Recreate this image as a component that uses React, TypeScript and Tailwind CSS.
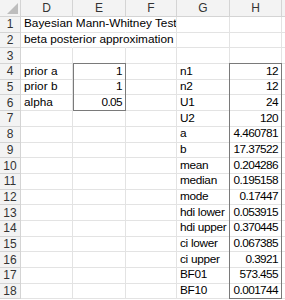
import React from 'react'

const cols = ['D', 'E', 'F', 'G', 'H']
const colW = ['w-[52px]', 'w-[53px]', 'w-[51px]', 'w-[53px]', 'w-[52px]']

type Cell = { t: string; right?: boolean }

// sheet content, keyed by row then column letter
const data: Record<number, Record<string, Cell>> = {
  1: { D: { t: 'Bayesian Mann-Whitney Test' } },
  2: { D: { t: 'beta posterior approximation' } },
  4: { D: { t: 'prior a' }, E: { t: '1', right: true }, G: { t: 'n1' }, H: { t: '12', right: true } },
  5: { D: { t: 'prior b' }, E: { t: '1', right: true }, G: { t: 'n2' }, H: { t: '12', right: true } },
  6: { D: { t: 'alpha' }, E: { t: '0.05', right: true }, G: { t: 'U1' }, H: { t: '24', right: true } },
  7: { G: { t: 'U2' }, H: { t: '120', right: true } },
  8: { G: { t: 'a' }, H: { t: '4.460781', right: true } },
  9: { G: { t: 'b' }, H: { t: '17.37522', right: true } },
  10: { G: { t: 'mean' }, H: { t: '0.204286', right: true } },
  11: { G: { t: 'median' }, H: { t: '0.195158', right: true } },
  12: { G: { t: 'mode' }, H: { t: '0.17447', right: true } },
  13: { G: { t: 'hdi lower' }, H: { t: '0.053915', right: true } },
  14: { G: { t: 'hdi upper' }, H: { t: '0.370445', right: true } },
  15: { G: { t: 'ci lower' }, H: { t: '0.067385', right: true } },
  16: { G: { t: 'ci upper' }, H: { t: '0.3921', right: true } },
  17: { G: { t: 'BF01' }, H: { t: '573.455', right: true } },
  18: { G: { t: 'BF10' }, H: { t: '0.001744', right: true } },
}

// rows whose title text spills over D..F, so the gridlines there are hidden
const spill = [1, 2]

const rows = Array.from({ length: 18 }, (_, i) => i + 1)

export default function App() {
  return (
    <div className="relative w-[285px] h-[300px] overflow-hidden bg-white text-[11.8px] text-black font-['Liberation_Sans',Arial,sans-serif]">
      {/* column header */}
      <div className="flex h-[17px] bg-[#f3f3f3] border-b border-[#d4d4d4]">
        <div className="relative w-[21px] shrink-0 border-r border-[#d4d4d4]">
          <div className="absolute right-[2px] bottom-[2px] w-0 h-0 border-l-[11px] border-l-transparent border-b-[11px] border-b-[#bdbdbd]" />
        </div>
        {cols.map((c, i) => (
          <div
            key={c}
            className={`${colW[i]} shrink-0 flex items-center justify-center border-r border-[#d4d4d4] text-[#333] text-[12px]`}
          >
            {c}
          </div>
        ))}
        <div className="flex-1" />
      </div>

      {rows.map((r) => (
        <div key={r} className="flex h-[15.7px]">
          <div className="w-[21px] shrink-0 flex items-center justify-center bg-[#f3f3f3] border-r border-b border-[#d4d4d4] text-[#333] text-[12px] leading-none">
            {r}
          </div>
          {cols.map((c, i) => {
            const cell = data[r]?.[c]
            const hideRight = spill.includes(r) && i < 2
            return (
              <div
                key={c}
                className={`${colW[i]} shrink-0 flex items-center border-r border-b border-b-[#e3e3e3] leading-none overflow-visible whitespace-nowrap ${
                  hideRight ? 'border-r-transparent' : 'border-r-[#e3e3e3]'
                } ${cell?.right ? 'justify-end pr-[3px] tracking-[-0.6px]' : 'pl-[3px]'} ${
                  c === 'G' ? 'tracking-[-0.3px]' : ''
                }`}
              >
                {cell?.t}
              </div>
            )
          })}
          <div className="flex-1 border-b border-[#e3e3e3]" />
        </div>
      ))}

      {/* range borders E4:E6 and H4:H18 */}
      <div className="pointer-events-none absolute left-[73px] top-[63px] w-[53px] h-[48px] border border-[#7a7a7a]" />
      <div className="pointer-events-none absolute left-[229px] top-[63px] w-[53px] h-[236px] border border-[#7a7a7a]" />
    </div>
  )
}
